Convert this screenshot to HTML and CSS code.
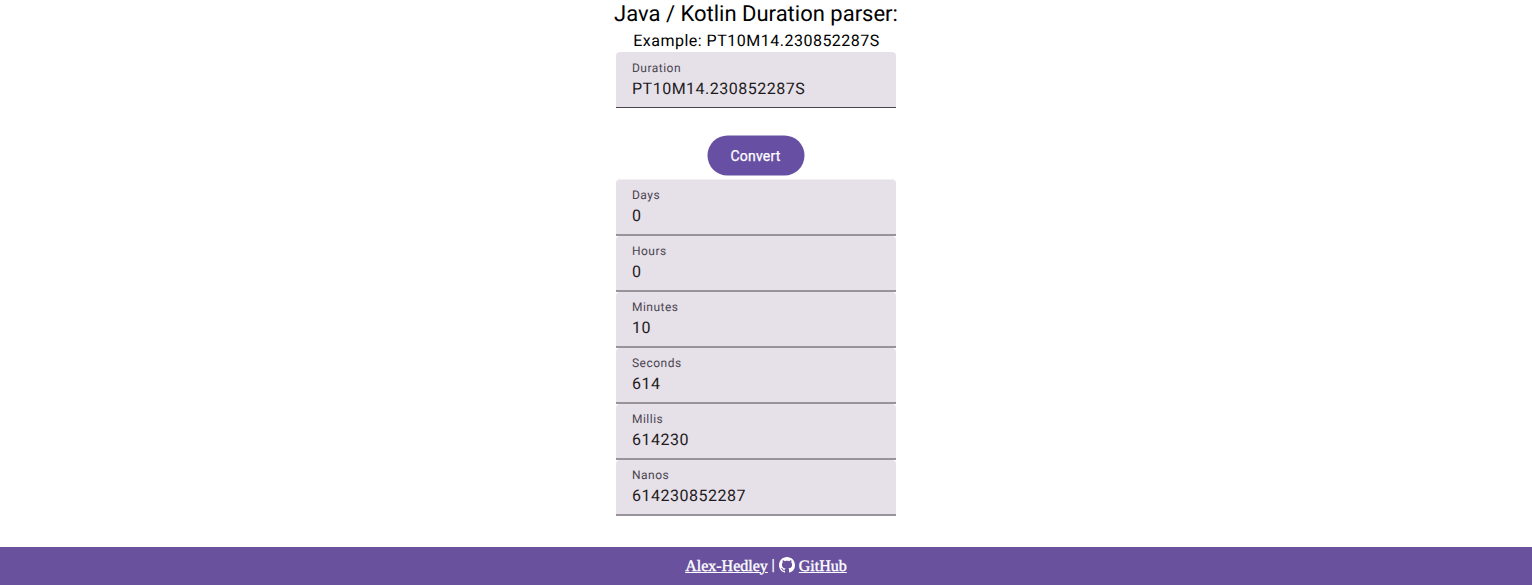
FILE: index.html
```html
<!DOCTYPE html>
<html lang="en">
<head>
<meta charset="utf-8">
<title>Duration parser</title>
<link rel="stylesheet" href="styles.css">
</head>
<body>
<main class="parser">
  <h1 class="title">Java / Kotlin Duration parser:</h1>
  <p class="example">Example: PT10M14.230852287S</p>
  <label class="field"><span class="label">Duration</span><span class="value">PT10M14.230852287S</span></label>
  <button class="convert">Convert</button>
  <section class="results">
    <div class="field"><span class="label">Days</span><span class="value">0</span></div>
    <div class="field"><span class="label">Hours</span><span class="value">0</span></div>
    <div class="field"><span class="label">Minutes</span><span class="value">10</span></div>
    <div class="field"><span class="label">Seconds</span><span class="value">614</span></div>
    <div class="field"><span class="label">Millis</span><span class="value">614230</span></div>
    <div class="field"><span class="label">Nanos</span><span class="value">614230852287</span></div>
  </section>
</main>
<footer class="footer">
  <a class="link" href="#">Alex-Hedley</a><span class="bar">|</span>
  <svg class="github" viewBox="0 0 16 16" fill="currentColor"><path d="M8 0C3.58 0 0 3.58 0 8c0 3.54 2.29 6.53 5.47 7.59.4.07.55-.17.55-.38 0-.19-.01-.82-.01-1.49-2.01.37-2.53-.49-2.69-.94-.09-.23-.48-.94-.82-1.13-.28-.15-.68-.52-.01-.53.63-.01 1.08.58 1.23.82.72 1.21 1.87.87 2.33.66.07-.52.28-.87.51-1.07-1.78-.2-3.64-.89-3.64-3.95 0-.87.31-1.59.82-2.15-.08-.2-.36-1.02.08-2.12 0 0 .67-.21 2.2.82.64-.18 1.32-.27 2-.27s1.36.09 2 .27c1.53-1.04 2.2-.82 2.2-.82.44 1.1.16 1.92.08 2.12.51.56.82 1.27.82 2.15 0 3.07-1.87 3.75-3.65 3.95.29.25.54.73.54 1.48 0 1.07-.01 1.93-.01 2.2 0 .21.15.46.55.38A8.01 8.01 0 0 0 16 8c0-4.42-3.58-8-8-8z"/></svg>
  <a class="link" href="#">GitHub</a>
</footer>
</body>
</html>
```
FILE: styles.css
```css
* { box-sizing: border-box; }
body {
  margin: 0;
  height: 585px;
  overflow: hidden;
  display: flex;
  flex-direction: column;
  background: #fff;
  font-family: Roboto, sans-serif;
  color: #000;
  text-rendering: geometricPrecision;
}
.parser {
  flex: 1;
  width: 1512px;
  display: flex;
  flex-direction: column;
  align-items: center;
}
.title {
  margin: 0;
  font-size: 22px;
  line-height: 28px;
  font-weight: 400;
  transform: translateY(1px);
}
.example {
  margin: 0;
  font-size: 16px;
  line-height: 24px;
  letter-spacing: 0.5px;
  transform: translate(0.5px, 0.5px);
}
.field {
  width: 280px;
  height: 56px;
  padding: 8px 16px;
  display: flex;
  flex-direction: column;
  background: #e6e0e9;
  border-bottom: 1px solid #49454f;
  border-radius: 4px 4px 0 0;
}
.results .field { border-bottom: 2px solid #97929c; }
.results .field:first-child { box-shadow: 0 -1px #f2eff4; }
.label {
  font-size: 12px;
  line-height: 16px;
  letter-spacing: 0.48px;
  color: #49454f;
}
.value {
  font-size: 16px;
  line-height: 24px;
  letter-spacing: 0.5px;
  color: #1d1b20;
  transform: translateY(0.5px);
}
.results .label { transform: translateY(-1px); }
.results .value { transform: none; }
.convert {
  width: 97px;
  height: 40px;
  margin: 28px 0 4px;
  padding: 0;
  border: 0;
  border-radius: 20px;
  background: #6750a4;
  color: #fff;
  font: 400 14px/20px Roboto, sans-serif;
  letter-spacing: 0.2px;
  -webkit-text-stroke: 0.25px #fff;
  transform: translate(-0.5px, -0.5px);
}
.footer {
  height: 38px;
  display: flex;
  align-items: center;
  justify-content: center;
  gap: 4px;
  background: #6a519e;
  color: #fff;
  font: 16px/18px "Liberation Serif", serif;
  -webkit-text-stroke: 0.4px #fff;
}
.link {
  color: inherit;
  padding-top: 1px;
}
.bar {
  width: 3px;
  font-size: 14px;
}
.github {
  width: 16px;
  height: 16px;
  margin-bottom: 3px;
}
```
